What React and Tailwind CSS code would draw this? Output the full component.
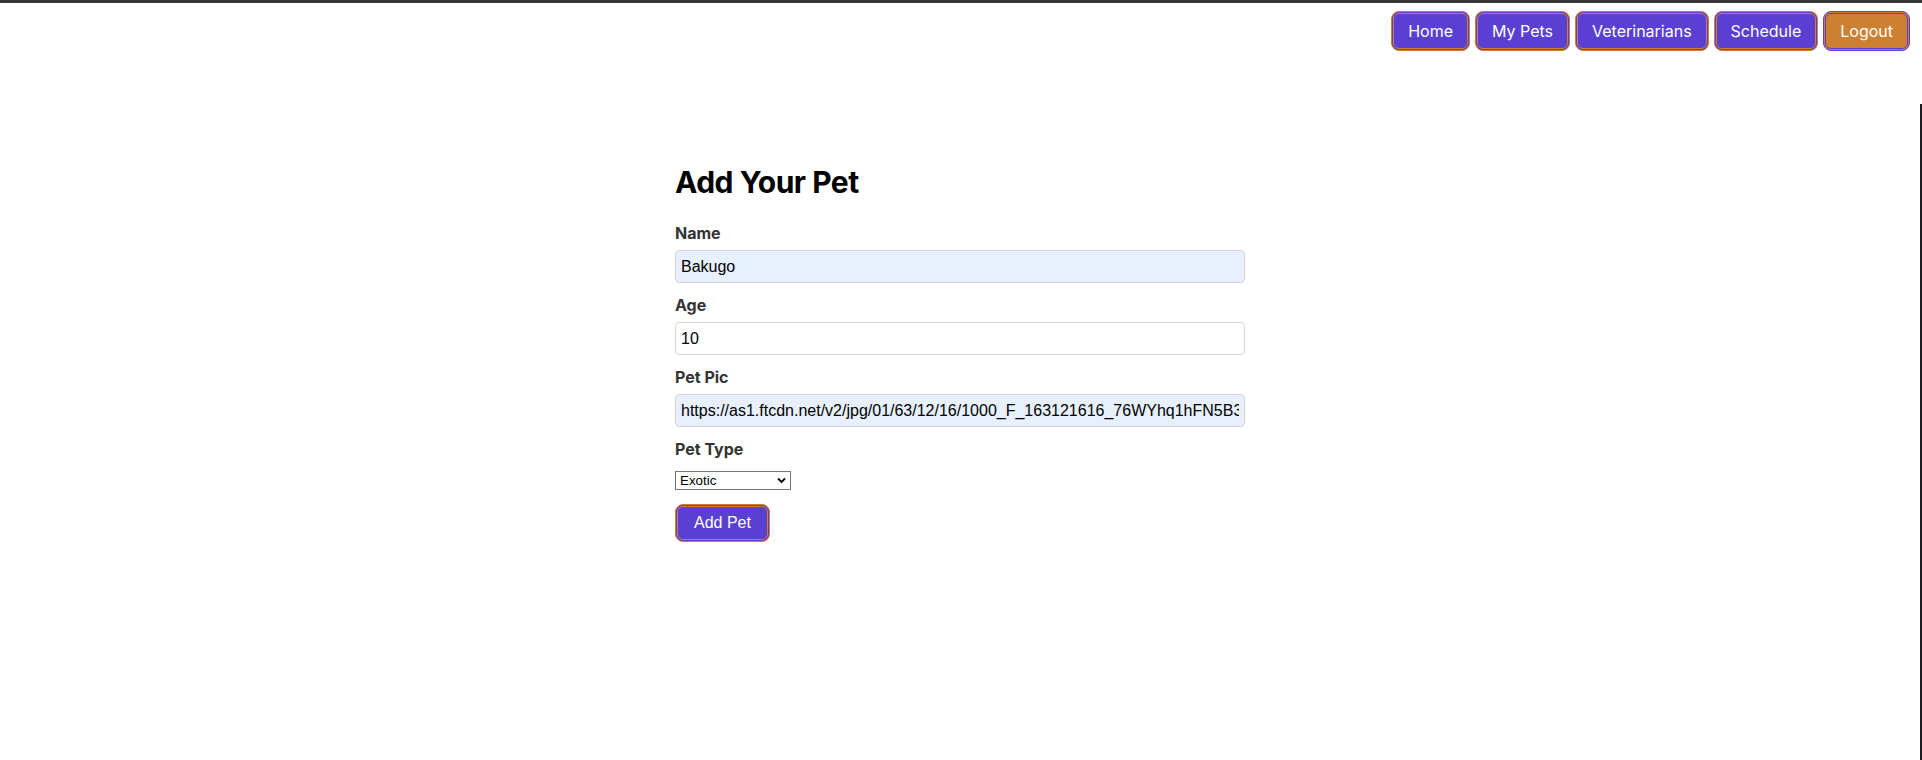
import React from "react";

const navItems = ["Home", "My Pets", "Veterinarians", "Schedule"];

function NavButton({ children, logout }) {
  return (
    <button
      type="button"
      className={
        "h-[40px] px-[14px] rounded-[8px] border-[3px] border-double text-white text-[16px] leading-none font-['Inter',sans-serif] " +
        (logout
          ? "bg-[#cd7f32] border-[#5b3fd3]"
          : "bg-[#5b3fd3] border-[#cd7f32]")
      }
    >
      {children}
    </button>
  );
}

function Field({ label, value, autofill }) {
  return (
    <div className="flex flex-col mb-[13px]">
      <label className="text-[16px] leading-[19px] font-bold text-[#333] mb-[7px] font-['Inter',sans-serif]">
        {label}
      </label>
      <input
        type="text"
        readOnly
        defaultValue={value}
        className={
          "h-[33px] w-full px-[5px] rounded-[4px] border border-[#d4d4d8] text-[16px] text-black font-['Liberation_Sans',Arial,sans-serif] outline-none " +
          (autofill ? "bg-[#e8f0fe]" : "bg-white")
        }
      />
    </div>
  );
}

export default function App() {
  return (
    <div className="flex flex-col h-[760px] bg-white overflow-hidden">
      <div className="h-[3px] bg-[#38383a] shrink-0" />
      <nav className="flex justify-end gap-[5px] pr-[12px] pt-[8px] shrink-0">
        {navItems.map((n) => (
          <NavButton key={n}>{n}</NavButton>
        ))}
        <NavButton logout>Logout</NavButton>
      </nav>
      <div className="flex flex-1">
        <main className="flex-1 flex justify-center">
          <form className="w-[570px] pt-[113px] flex flex-col" onSubmit={(e) => e.preventDefault()}>
            <h1 className="text-[30px] leading-[36px] tracking-[-0.5px] font-bold text-black mb-[24px] font-['Inter',sans-serif]">
              Add Your Pet
            </h1>
            <Field label="Name" value="Bakugo" autofill />
            <Field label="Age" value="10" />
            <Field
              label="Pet Pic"
              value="https://as1.ftcdn.net/v2/jpg/01/63/12/16/1000_F_163121616_76WYhq1hFN5B3dSZ4ZYWEkJPNyRYjbSj.jpg"
              autofill
            />
            <label className="text-[16px] leading-[19px] font-bold text-[#333] mb-[12px] font-['Inter',sans-serif]">
              Pet Type
            </label>
            <div
              role="combobox"
              aria-expanded="false"
              className="flex items-center justify-between w-[116px] h-[19px] pl-[4px] pr-[4px] border border-[#767676] bg-white"
            >
              <span className="text-[13.33px] leading-[16px] text-black font-['Liberation_Sans',Arial,sans-serif]">
                Exotic
              </span>
              <svg width="9" height="7" viewBox="0 0 9 7">
                <path d="M1 1.5 L4.5 5 L8 1.5" stroke="#000" strokeWidth="1.8" fill="none" />
              </svg>
            </div>
            <div className="mt-[14px]">
              <button
                type="submit"
                className="h-[38px] px-[16px] rounded-[8px] border-[3px] border-double border-[#cd7f32] bg-[#5b3fd3] text-white text-[16px] leading-none font-['Liberation_Sans',Arial,sans-serif]"
              >
                Add Pet
              </button>
            </div>
          </form>
        </main>
        <div className="w-[2px] mt-[53px] bg-[#1c1c1f] shrink-0" />
      </div>
    </div>
  );
}
